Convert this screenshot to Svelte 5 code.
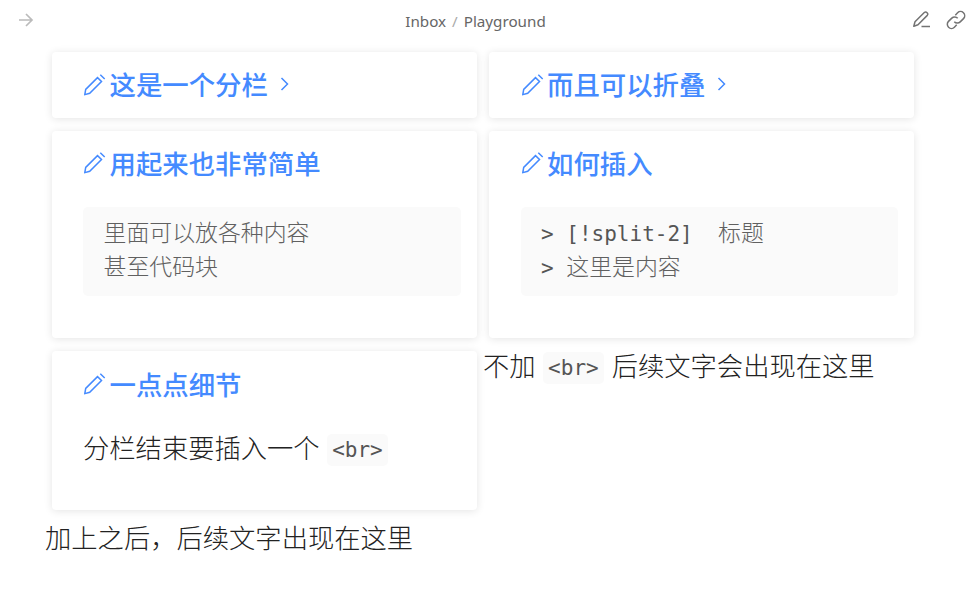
<script>
  const cards = [
    { title: '这是一个分栏', folded: true, size: 'folded' },
    { title: '而且可以折叠', folded: true, size: 'folded' },
    { title: '用起来也非常简单', size: 'block', code: [['', '里面可以放各种内容'], ['', '甚至代码块']] },
    { title: '如何插入', size: 'block', code: [['> [!split-2]  ', '标题'], ['> ', '这里是内容']] },
    { title: '一点点细节', size: 'note', text: '分栏结束要插入一个', tag: '<br>' }
  ];
</script>

<header>
  <svg class="forward" width="16" height="16" viewBox="0 0 16 16"><path d="M1 8H14M8 2L14 8L8 14" /></svg>
  <nav><span>Inbox</span><span class="slash">/</span><span>Playground</span></nav>
  <div class="actions">
    <svg width="20" height="18" viewBox="0 0 20 18"><path d="M1.8 15.2L3 10.7L12.3 1.5Q13.7 .4 15.1 1.7Q16.4 3 15.3 4.4L6 13.8L1.8 15.2ZM9.5 15.5H18" /></svg>
    <svg width="20" height="20" viewBox="0 0 20 20"><path d="M9.3 5.2L11.6 2.8A4.1 4.1 0 0 1 17.5 8.6L14.2 11.9A4.1 4.1 0 0 1 8.3 11.7M10.7 14.8L8.4 17.2A4.1 4.1 0 0 1 2.5 11.4L5.8 8.1A4.1 4.1 0 0 1 11.7 8.3" /></svg>
  </div>
</header>

<main>
  <div class="columns">
    {#each cards as card}
      <section class={card.size}>
        <h2>
          <svg class="pen" width="22" height="22" viewBox="0 0 22 22"><path d="M.8 20.6L1.7 15.4L13.5 3.6L17.5 7.5L5.7 19.3L.8 20.6ZM16.3 .8L20.7 5" /></svg>
          <span>{card.title}</span>
          {#if card.folded}<svg class="chevron" width="10" height="16" viewBox="0 0 10 16"><path d="M1.5 2L7.5 8L1.5 14" /></svg>{/if}
        </h2>
        {#if card.code}
          <pre>{#each card.code as line}<div><code>{line[0]}</code>{line[1]}</div>{/each}</pre>
        {/if}
        {#if card.text}
          <p>{card.text}<code class="tag">{card.tag}</code></p>
        {/if}
      </section>
    {/each}
    <p class="beside">不加<code class="tag">&lt;br&gt;</code>后续文字会出现在这里</p>
  </div>
  <p class="after">加上之后，后续文字出现在这里</p>
</main>

<style>
  :global(body) { margin: 0; background: #fff; overflow: hidden; }
  header { height: 46px; box-sizing: border-box; display: grid; grid-template-columns: 1fr auto 1fr; align-items: start; padding: 10px 5px 0 18px; font: 15.2px/22px "Noto Sans", sans-serif; color: #666; }
  svg { display: block; fill: none; stroke: currentColor; stroke-width: 1.5; flex: none; }
  .forward { color: #bbb; margin-top: 2px; stroke-width: 1.7; }
  nav { display: flex; gap: 6px; margin-right: 33px; }
  .slash { color: #aaa; }
  .actions { display: flex; justify-content: flex-end; gap: 14px; color: #737373; stroke-linejoin: round; }
  .actions svg:first-child { margin-top: 1px; }
  main { width: 875px; padding-left: 46px; font: 300 26.3px/42px "Noto Sans CJK SC", sans-serif; color: #222; }
  .columns { display: flex; flex-wrap: wrap; align-items: flex-start; width: 875px; }
  section { box-sizing: border-box; width: 425px; margin: 6px 6px 6.5px; padding: 11px 16px 0 31px; border-radius: 4px; background: #fff; box-shadow: 0 1px 8px rgba(0, 0, 0, .11); }
  section:nth-child(even) { padding-left: 32px; }
  .folded { height: 66px; }
  .block { height: 207.5px; }
  .note { height: 159px; padding-top: 12px; }
  h2 { margin: 0; height: 42px; display: flex; align-items: center; color: #448aff; font-size: 26.4px; font-weight: 500; }
  .pen { margin: 1px 0 0 .5px; }
  h2 span { margin-left: 4px; }
  section:nth-child(even) h2 span { margin-left: 3.5px; }
  .chevron { margin: 0 0 0 12px; }
  pre { box-sizing: border-box; height: 89px; margin: 23px 0 0; padding: 7px 20.5px; border-radius: 5px; background: #fafafa; color: #606060; font: 300 22.9px/34px "Noto Sans CJK SC", sans-serif; }
  section:nth-child(even) pre { padding-left: 20px; }
  pre div { height: 34px; }
  code { font: 400 21px/34px "DejaVu Sans Mono", monospace; color: #555; }
  p { margin: 0; white-space: nowrap; }
  section p { margin-top: 21px; }
  .tag { display: inline-block; position: relative; top: -1px; height: 32px; line-height: 32px; padding: 0 5.5px; margin: 0 7.5px 0 7px; border-radius: 5px; background: #fafafa; }
  .beside { width: 391px; margin-top: -1px; }
  .after { margin-left: -1px; }
</style>
